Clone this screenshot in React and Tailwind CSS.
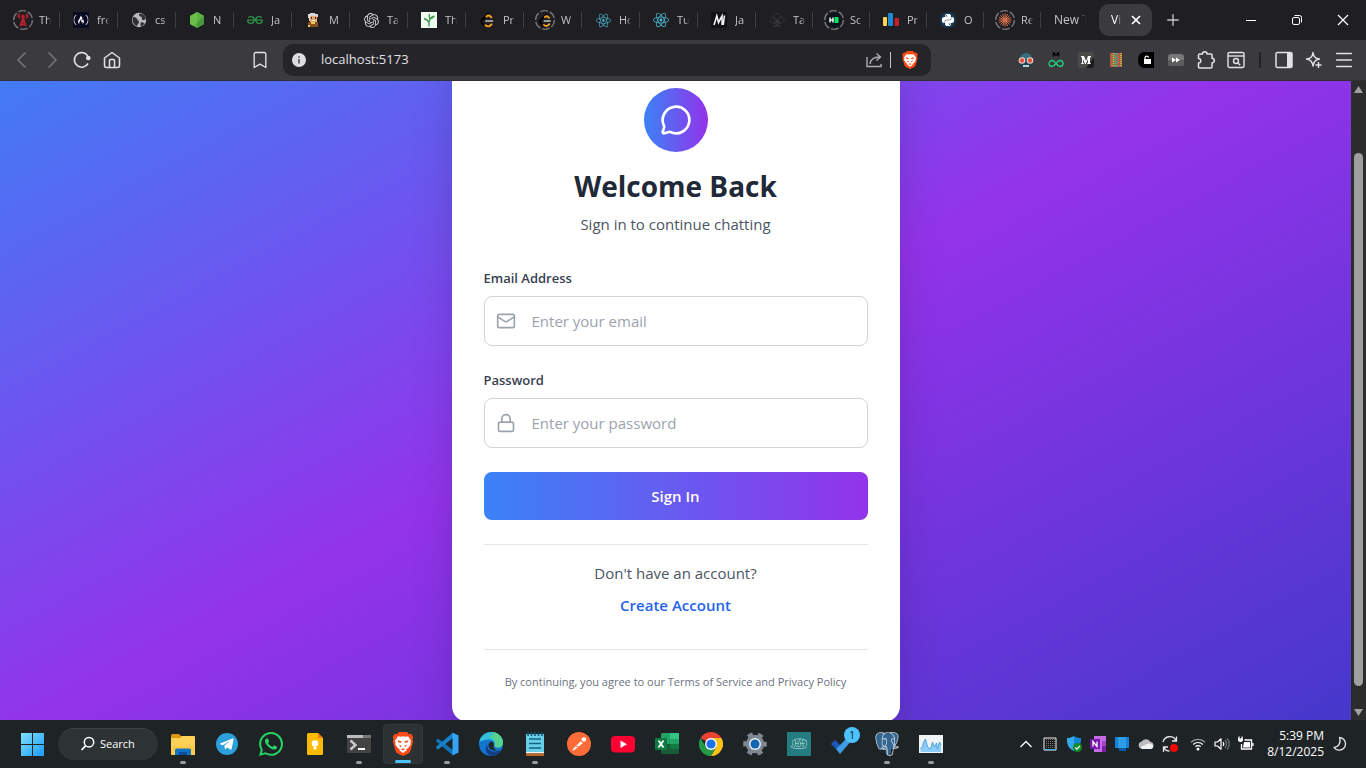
import { useLayoutEffect, useRef } from "react";
import { Bookmark, Lock, Mail, Menu, MessageCircle, Plus, X } from "lucide-react";
import {
  SiFreecodecamp,
  SiGeeksforgeeks,
  SiOpenai,
  SiPostgresql,
  SiPython,
  SiReact,
  SiWhatsapp,
} from "react-icons/si";

/* ---------- tab favicons ---------- */

function Ring({ children }) {
  return (
    <svg viewBox="0 0 24 24" className="size-6">
      {children}
      <circle cx="12" cy="12" r="9.4" fill="none" stroke="#77767b" strokeWidth="1.3" strokeDasharray="7.8 2" />
    </svg>
  );
}

function Box({ children }) {
  return (
    <svg viewBox="0 0 16 16" className="size-4">
      {children}
    </svg>
  );
}

function LeetMark() {
  return (
    <g fill="none" strokeLinecap="round" strokeWidth="2">
      <path d="M9.500 1.500 3 7.800a2.400 2.400 0 0 0 0 3.200l3 2.900" stroke="#020202" />
      <path d="M7.500 4.500c1.300-1.200 2.800-1.200 4 0l.8.8M6.500 13.200c1.500 1.400 3.800 1.400 5.200 0l.8-.8" stroke="#f5a01d" />
      <path d="M7 9h6.500" stroke="#c4c4c4" strokeWidth="1.700" />
    </g>
  );
}

const tabs = [
  {
    label: "Th",
    icon: (
      <Ring>
        <g stroke="#b3202c" fill="none" strokeWidth="1.4">
          <path d="M12 10 9.200 18M12 10l2.800 8M10.500 14h3M9.900 16.500h4.200" strokeWidth="2" />
          <path d="M9 10.500a3.500 3.500 0 0 1 0-5M15 10.500a3.500 3.500 0 0 0 0-5M7.200 9.500v-3M16.800 9.500v-3" />
          <circle cx="12" cy="8.500" r="1.200" fill="#b3202c" />
        </g>
      </Ring>
    ),
  },
  {
    label: "fre",
    icon: (
      <Box>
        <rect width="16" height="16" fill="#0a0a23" />
        <g transform="translate(.5 .5)" color="#fff"><SiFreecodecamp size={15} /></g>
      </Box>
    ),
  },
  {
    label: "cs",
    icon: (
      <Box>
        <circle cx="8" cy="8" r="7.200" fill="#b9b9bb" />
        <path d="M2 5c2 0 3.500.5 4 2s2 1.500 2 3-1.500 2-2 4c-2-.5-4.500-3-4.500-6zM8.500 1.500C7 3.500 9 4 10.500 5s-.5 2.500 1 3 2-.5 3.200-.5C14.500 4 12 1.600 8.500 1.500zM10 10.500c1.500-.5 3 .5 3.500 1A7 7 0 0 1 10 14.500c-.5-1.500-1-3 0-4z" fill="#303034" />
      </Box>
    ),
  },
  {
    label: "N",
    icon: (
      <Box>
        <path d="M8 0l7 4v8l-7 4-7-4V4z" fill="#5fb343" />
        <path d="M8 0l7 4v8l-7 4z" fill="#479a38" />
        <path d="M8 0l7 4L4 14 1 12V4z" fill="#75c750" opacity=".55" />
      </Box>
    ),
  },
  { label: "Ja", icon: <SiGeeksforgeeks className="size-4 text-[#2f8d46]" /> },
  {
    label: "M",
    icon: (
      <Box>
        <path d="M3 2h2V1h5v1h3v3h-1v4H4V6H3z" fill="#d8d8d8" />
        <path d="M5 4h7v6H5z" fill="#e9a86c" />
        <path d="M6 5h1v2H6zM10 5h1v2h-1z" fill="#3b2415" />
        <path d="M7 8h3v1H7z" fill="#fff" />
        <path d="M3 10h10v5H3z" fill="#8a4f1f" />
        <path d="M6 10h4v2H6zM3 13h2v2H3z" fill="#f0c35a" />
      </Box>
    ),
  },
  { label: "Ta", icon: <SiOpenai className="size-[15px] text-[#d0d0d2]" /> },
  {
    label: "Th",
    icon: (
      <Box>
        <rect width="16" height="16" fill="#f1faef" />
        <path d="M8 14.500c-.3-3 0-6 1.500-8.500M8.200 10.500C6.500 8 5 7 3 6.500M9 7.500c1-2 2.500-3 4.500-3.200M8.800 7C8 5 8 3.500 8.500 2" fill="none" stroke="#3f9d50" strokeWidth="1.400" />
        <path d="M3 6.500c2-.3 3.700.5 4.500 2.500C5.500 9 4 8 3 6.500zM13.500 4c-.5 2-1.800 3-4 3 .5-2 2-3 4-3z" fill="#3f9d50" />
      </Box>
    ),
  },
  { label: "Pr", icon: <Box><LeetMark /></Box> },
  { label: "W", icon: <Ring><g transform="translate(5 5) scale(.9)"><LeetMark /></g></Ring> },
  { label: "Ho", icon: <SiReact className="size-[15px] text-[#45a5bc]" /> },
  { label: "Tu", icon: <SiReact className="size-4 text-[#4cb5cf]" /> },
  {
    label: "Ja",
    icon: (
      <Box>
        <rect width="16" height="16" fill="#121216" />
        <path d="M3 13 5.800 4l1.700 6.500L11 4l.2 9M13.500 3.500 12.200 13" fill="none" stroke="#f4f4f4" strokeWidth="1.600" />
      </Box>
    ),
  },
  {
    label: "Ta",
    icon: (
      <Box>
        <g fill="none" stroke="#414145">
          <circle cx="8" cy="5" r="3.500" strokeDasharray="1.500 1" />
          <circle cx="4" cy="8" r="3" strokeDasharray="1.500 1" />
          <circle cx="12" cy="8" r="3" strokeDasharray="1.500 1" />
          <path d="M8 8v6M5 12l3-3 3 3M4 14h8" />
        </g>
      </Box>
    ),
  },
  {
    label: "Sc",
    icon: (
      <Ring>
        <rect x="5" y="5" width="14" height="14" rx="6" fill="#0c141c" />
        <path d="M8 9.500v5M11 9.500v5M8 12h3" stroke="#f4f4f4" strokeWidth="1.500" />
        <path d="M12.500 9h4v6h-4z" fill="#00ea64" />
      </Ring>
    ),
  },
  {
    label: "Pr",
    icon: (
      <Box>
        <rect x="0" y="5" width="4" height="9" rx="1" fill="#ffd54f" />
        <rect x="5" y="1" width="5" height="13" rx="1" fill="#1e88d2" />
        <rect x="11.500" y="6" width="4.500" height="8" rx="1" fill="#c4202c" />
      </Box>
    ),
  },
  {
    label: "O",
    icon: (
      <Box>
        <circle cx="8" cy="8" r="8" fill="#173853" />
        <g transform="translate(2 2)" color="#fff"><SiPython size={12} /></g>
      </Box>
    ),
  },
  {
    label: "Re",
    icon: (
      <Ring>
        <path d="M12 5.500v13M5.500 12h13M7.400 7.400l9.200 9.200M16.600 7.400l-9.200 9.200M9.500 6l5 12M14.500 6l-5 12M6 9.500l12 5M18 9.500l-12 5" stroke="#d9714c" strokeWidth="1" />
      </Ring>
    ),
  },
];

function TabStrip() {
  return (
    <div className="flex h-10 shrink-0 items-center bg-[#1f1e23] text-[12px] text-[#c4c3c8]">
      <div className="flex min-w-0 pl-[2px]">
        {tabs.map((tab, i) => (
          <button key={i} className={i < 13 ? "flex h-8 w-[58px] items-center pl-[9px]" : "flex h-8 w-[57px] items-center pl-[9px]"}>
            <span className="grid size-6 shrink-0 place-items-center">{tab.icon}</span>
            <span className="ml-1 w-3 overflow-hidden text-left text-[11px] whitespace-nowrap [mask-image:linear-gradient(to_right,#000_70%,transparent)]">
              {tab.label}
            </span>
            <span className="ml-auto h-4 w-px bg-[#3e3d42]" />
          </button>
        ))}
      </div>
      <button className="ml-[13px] w-8 overflow-hidden text-left whitespace-nowrap [mask-image:linear-gradient(to_right,#000_75%,transparent)]">
        New T
      </button>
      <div className="ml-[13px] flex h-8 w-[53px] items-center rounded-[10px] bg-[#3b3a3f] pl-3 text-white">
        <button className="w-[10px] overflow-hidden text-left whitespace-nowrap [mask-image:linear-gradient(to_right,#000_60%,transparent)]">
          Vi
        </button>
        <button aria-label="Close tab" className="ml-2">
          <X className="size-[14px]" strokeWidth={3} />
        </button>
      </div>
      <button aria-label="New tab" className="ml-3">
        <Plus className="size-[18px]" strokeWidth={1.800} />
      </button>
      <div className="ml-auto flex text-white">
        <button aria-label="Minimize" className="grid h-8 w-[46px] place-items-center">
          <svg viewBox="0 0 12 12" className="size-3"><path d="M1 6.500h10" stroke="currentColor" /></svg>
        </button>
        <button aria-label="Restore" className="grid h-8 w-[46px] place-items-center">
          <svg viewBox="0 0 12 12" className="size-3" fill="none" stroke="currentColor">
            <rect x="1.500" y="3.500" width="7" height="7" rx="1.500" />
            <path d="M3.500 1.500h5a2 2 0 0 1 2 2v5" />
          </svg>
        </button>
        <button aria-label="Close" className="grid h-8 w-[46px] place-items-center">
          <svg viewBox="0 0 12 12" className="size-3"><path d="M1 1l10 10M11 1 1 11" stroke="currentColor" strokeWidth="1.200" /></svg>
        </button>
      </div>
    </div>
  );
}

/* ---------- toolbar ---------- */

function BraveLion({ className }) {
  return (
    <svg viewBox="0 0 24 24" className={className}>
      <path d="M8 0h8l2 2.200 2.200-.4L22.300 5l-.8 2.200.7 2.300-2.700 9.300c-.5 1.500-1.300 2-2.500 2.900L12 24l-5-2.300c-1.200-.9-2-1.400-2.500-2.900L1.800 9.500l.7-2.300L1.700 5l2.100-3.200 2.200.4z" fill="#fb4a16" />
      <path d="M7 4.200l2.600.6L12 4.300l2.400.5 2.600-.6 3 4.300-.5 2.200.2 1.800-2.700 3.800-1.700.7.4 1.300L12 21l-3.700-2.700.4-1.300-1.700-.7-2.700-3.800.2-1.800L4 8.500z" fill="#fff" />
      <path d="m6.500 8.300 4 .9-.5 1.900-2.700-.9zM17.500 8.300l-4 .9.500 1.900 2.700-.9zM8 12.500l2.500 1.300-.8 1.700zM16 12.500l-2.500 1.300.8 1.700zM10 17.200l2-1 2 1-2 1.300z" fill="#fb4a16" />
    </svg>
  );
}

const navIcons = [
  ["Back", <svg viewBox="0 0 18 18" className="size-[18px] text-[#77767b]"><path d="M12.500 1.500 5 9l7.500 7.500" fill="none" stroke="currentColor" strokeWidth="1.500" /></svg>],
  ["Forward", <svg viewBox="0 0 18 18" className="size-[18px] text-[#77767b]"><path d="M5.500 1.500 13 9l-7.500 7.500" fill="none" stroke="currentColor" strokeWidth="1.500" /></svg>],
  [
    "Reload",
    <svg viewBox="0 0 18 18" className="size-[18px]">
      <path d="M13.500 3.400A7.300 7.300 0 1 0 15 12.500M13.500 3.400l1.800 3" fill="none" stroke="currentColor" strokeWidth="1.600" />
      <circle cx="15.300" cy="7" r="2.300" fill="currentColor" />
    </svg>,
  ],
  [
    "Home",
    <svg viewBox="0 0 18 18" className="size-[18px]" fill="none" stroke="currentColor" strokeWidth="1.500">
      <path d="M1.500 7 9 1.500 16.500 7v7.500a2 2 0 0 1-2 2h-11a2 2 0 0 1-2-2z" strokeLinejoin="round" />
      <path d="M6.500 16V9.500a1 1 0 0 1 1-1h3a1 1 0 0 1 1 1V16" />
    </svg>,
  ],
];

const extensions = [
  [
    "Goggles",
    <Box>
      <path d="M2 7a6 6 0 0 1 12 0z" fill="#35707f" />
      <path d="M3 7h10v8H3z" fill="#1d4654" />
      <circle cx="4" cy="8.500" r="3.300" fill="#e8d3ce" /><circle cx="12" cy="8.500" r="3.300" fill="#e8d3ce" />
      <circle cx="4" cy="8.500" r="2.200" fill="#e2503c" /><circle cx="12" cy="8.500" r="2.200" fill="#e2503c" />
      <path d="M5 13h6v2H5z" fill="#b8d5db" />
    </Box>,
  ],
  [
    "Medium reader",
    <Box>
      <path d="M5.500 4.500V.5L8 3.500l2.500-3v4" fill="none" stroke="#060606" strokeWidth="1.300" />
      <path d="M8 11.500C6.500 9.500 5.500 8.500 4 8.500a3 3 0 0 0 0 6c1.500 0 2.500-1 4-3s2.500-3 4-3a3 3 0 0 1 0 6c-1.500 0-2.500-1-4-3z" fill="none" stroke="#1fcf7a" strokeWidth="1.300" />
    </Box>,
  ],
  [
    "Medium",
    <Box>
      <rect width="16" height="16" rx="3" fill="#4b4a49" /><path d="M16 5v8a3 3 0 0 1-3 3H8z" fill="#1b1b1b" />
      <path d="M3 4h3l2 5 2-5h3v1l-1 .5V11l1 .5v.5H9v-.5l1-.5V7l-2.200 5H7L5 7v4l1 .5v.5H3v-.5l1-.5V5.500L3 5z" fill="#fff" />
    </Box>,
  ],
  [
    "Tapestry",
    <Box>
      <rect x="2" y="1" width="12" height="14" fill="#8f6d3e" />
      <path d="M3 1v14M11 1v14" stroke="#d94b48" strokeWidth="1.500" strokeDasharray="2 1" />
      <path d="M5.500 1v14M13 1v14" stroke="#e5bf48" strokeWidth="1.500" strokeDasharray="1 1" />
      <path d="M7.500 1v14" stroke="#5ca27c" strokeWidth="2" strokeDasharray="2 1" />
      <path d="M9.500 1v14" stroke="#4f92c9" strokeDasharray="2 2" />
    </Box>,
  ],
  [
    "Unlock",
    <Box>
      <path d="M6 0h10v16H6a6 8 0 0 1 0-16z" fill="#000" />
      <path d="M6 7h7v5H6z" fill="#fff" /><path d="M7 7V5.500a1.800 1.800 0 0 1 3.500 0" fill="none" stroke="#fff" strokeWidth="1.200" />
    </Box>,
  ],
  [
    "Speed",
    <Box>
      <rect y="2" width="16" height="12" rx="3" fill="#777" /><path d="M0 8h16v3a3 3 0 0 1-3 3H3a3 3 0 0 1-3-3z" fill="#5c5c5c" />
      <path d="M4 5.500 8 8l-4 2.500zM8 5.500 12 8l-4 2.500z" fill="#fff" />
    </Box>,
  ],
  [
    "Extensions",
    <svg viewBox="0 0 20 20" className="size-5" fill="none" stroke="currentColor" strokeWidth="1.500" strokeLinejoin="round">
      <path d="M6.500 4a2.300 2.300 0 0 1 4.600 0H15a1 1 0 0 1 1 1v3.300a2.300 2.300 0 0 1 0 4.600V17a1 1 0 0 1-1 1H3.500a1 1 0 0 1-1-1v-4a2.300 2.300 0 0 0 0-4.600V5a1 1 0 0 1 1-1z" />
    </svg>,
  ],
  [
    "Search page",
    <svg viewBox="0 0 18 18" className="size-[18px]" fill="none" stroke="currentColor" strokeWidth="1.400">
      <rect x="1" y="1.500" width="16" height="15" rx="1.500" /><path d="M1 5h16" /><circle cx="9" cy="10" r="2.500" /><path d="m11 12 2.200 2.200" />
    </svg>,
  ],
];

const panelIcons = [
  [
    "Side panel",
    <svg viewBox="0 0 18 18" className="size-[18px]">
      <rect x="1" y="1.500" width="16" height="15" rx="1.500" fill="none" stroke="currentColor" strokeWidth="1.500" /><path d="M12 2h5v14h-5z" fill="currentColor" />
    </svg>,
  ],
  [
    "Assistant",
    <svg viewBox="0 0 18 18" className="size-[18px]" fill="none" stroke="currentColor" strokeLinejoin="round" strokeWidth="1.400">
      <path d="M8 1.500c.8 4.500 2 5.700 6.500 6.500-2 .4-3.300.8-4.200 1.700S8.500 12.500 8 15c-.8-4.500-2-6-6.500-7C6 7.200 7.200 6 8 1.500z" /><path d="M13.500 11v6M10.500 14h6" />
    </svg>,
  ],
  ["Menu", <Menu className="size-[22px]" strokeWidth={1.700} />],
];

function ToolButton({ label, children }) {
  return (
    <button aria-label={label} className="grid size-[30px] shrink-0 place-items-center">
      {children}
    </button>
  );
}

function Toolbar() {
  return (
    <div className="flex h-[41px] shrink-0 items-center border-b border-[#302f34] bg-[#3b3a3f] px-[7px] text-[#e2e1e6]">
      {navIcons.map(([label, icon]) => <ToolButton key={label} label={label}>{icon}</ToolButton>)}
      <div className="flex-[118]" />
      <ToolButton label="Bookmark"><Bookmark className="size-5" strokeWidth={1.600} /></ToolButton>
      <div className="ml-2 min-w-0 flex-[648]">
        <div className="flex h-8 items-center rounded-[10px] bg-[#252429] pr-3 pl-[9px]">
          <svg viewBox="0 0 14 14" className="size-[14px] shrink-0">
            <circle cx="7" cy="7" r="7" fill="#dddce1" /><path d="M7 6v4.500M7 3.200v1.600" stroke="#414046" strokeWidth="1.500" />
          </svg>
          <input aria-label="Address" defaultValue="localhost:5173" className="ml-[15px] min-w-0 flex-1 bg-transparent text-[13px] outline-none" />
          <button aria-label="Share">
            <svg viewBox="0 0 18 18" className="size-[18px] text-[#aeadb3]" fill="none" stroke="currentColor" strokeWidth="1.400">
              <path d="M2 6v9.500h14V13M5 13c.5-4 3-7 9.500-7M11.500 2.500 15.500 6l-4 3.500" />
            </svg>
          </button>
          <span className="mx-[7px] h-4 w-px bg-[#c6c5ca]" />
          <button aria-label="Shields" className="ml-[3px]"><BraveLion className="size-[18px]" /></button>
        </div>
      </div>
      <div className="flex-[80]" />
      {extensions.map(([label, icon]) => <ToolButton key={label} label={label}>{icon}</ToolButton>)}
      <span className="mx-2 h-4 w-[2px] shrink-0 bg-[#232227]" />
      {panelIcons.map(([label, icon]) => <ToolButton key={label} label={label}>{icon}</ToolButton>)}
    </div>
  );
}

/* ---------- sign-in page ---------- */

function Field({ id, label, type, placeholder, Icon }) {
  return (
    <div>
      <label htmlFor={id} className="mb-2 block text-[13px] leading-5 font-semibold text-[#374151]">{label}</label>
      <div className="flex h-[50px] items-center gap-4 rounded-lg border border-[#d1d5db] px-[11px]">
        <Icon className="size-5 shrink-0 text-[#9ca3af]" />
        <input id={id} type={type} placeholder={placeholder} className="min-w-0 flex-1 text-[15px] leading-6 outline-none placeholder:text-[#9ca3af]" />
      </div>
    </div>
  );
}

function SignInCard() {
  return (
    <section className="w-full max-w-md rounded-2xl bg-white px-8 pt-[54px] pb-8 shadow-2xl">
      <header className="mb-8 text-center">
        <div className="mx-auto mb-4 grid size-16 place-items-center rounded-full bg-linear-to-r/srgb from-[#3b82f6] to-[#9333ea]">
          <MessageCircle className="size-8 text-white" />
        </div>
        <h1 className="mb-2 text-[28px] leading-9 font-bold text-[#1f2937]">Welcome Back</h1>
        <p className="text-[15px] leading-6 text-[#4b5563]">Sign in to continue chatting</p>
      </header>
      <form className="flex flex-col gap-6" onSubmit={(e) => e.preventDefault()}>
        <Field id="email" label="Email Address" type="email" placeholder="Enter your email" Icon={Mail} />
        <Field id="password" label="Password" type="password" placeholder="Enter your password" Icon={Lock} />
        <button className="h-12 rounded-lg bg-linear-to-r/srgb from-[#3b82f6] to-[#9333ea] text-[15px] leading-6 font-semibold text-white">
          Sign In
        </button>
      </form>
      <div className="mt-6 border-t border-[#e5e7eb] pt-4 text-center text-[15px] leading-6">
        <p className="mb-2 text-[#4b5563]">Don't have an account?</p>
        <button className="block w-full font-semibold text-[#2563eb]">Create Account</button>
      </div>
      <p className="mt-8 border-t border-[#e5e7eb] pt-6 text-center text-[11px] leading-4 text-[#6b7280]">
        By continuing, you agree to our Terms of Service and Privacy Policy
      </p>
    </section>
  );
}

function Page() {
  const view = useRef(null);
  useLayoutEffect(() => {
    view.current.scrollTop = 67;
  }, []);
  return (
    <div className="flex min-h-0 flex-1">
      <main ref={view} className="min-w-0 flex-1 overflow-y-auto [scrollbar-width:none]">
        <div className="flex min-h-full items-center justify-center bg-linear-to-br/srgb from-[#3b82f6] via-[#9333ea] to-[#4338ca] py-5">
          <SignInCard />
        </div>
      </main>
      <div className="flex w-[15px] shrink-0 flex-col items-center bg-[#2c2c2c] text-[#9f9f9f]">
        <svg viewBox="0 0 15 16" className="h-4 w-[15px]"><path d="M7.500 5 12 12H3z" fill="currentColor" /></svg>
        <div className="flex-[56]" />
        <div className="w-[9px] flex-[534] rounded-full bg-[#9f9f9f]" />
        <div className="flex-[18]" />
        <svg viewBox="0 0 15 16" className="h-4 w-[15px]"><path d="M7.500 12 12 5H3z" fill="currentColor" /></svg>
      </div>
    </div>
  );
}

/* ---------- taskbar ---------- */

function App24({ children }) {
  return <svg viewBox="0 0 24 24" className="size-6">{children}</svg>;
}

const apps = [
  {
    name: "Files",
    running: true,
    icon: (
      <App24>
        <path d="M0 3.500A1.500 1.500 0 0 1 1.500 2H8l3 3v4H0z" fill="#d9960f" />
        <path d="M0 6h9l1.500-2H23a1 1 0 0 1 1 1v18H0z" fill="#ffd257" />
        <path d="M0 14h24v9H0z" fill="#fbc433" opacity=".5" />
        <path d="M4 23v-5a1.500 1.500 0 0 1 1.500-1.500h13A1.500 1.500 0 0 1 20 18v5z" fill="#1272c4" /><path d="M8 20h8v3H8z" fill="#0a4e96" />
      </App24>
    ),
  },
  {
    name: "Telegram",
    icon: (
      <App24>
        <circle cx="12" cy="12" r="11" fill="#2ba0dc" />
        <path d="m4.500 11.800 13-5.300c.7-.2 1.200.2 1 1.100L16.600 17c-.2.800-.8 1-1.400.6l-3-2.200-1.600 1.500c-.3.300-.7.200-.8-.3l-.5-2.800 6-5.300-7.400 4.700-3-1z" fill="#fff" />
      </App24>
    ),
  },
  { name: "WhatsApp", icon: <SiWhatsapp className="size-6 text-[#25d366]" /> },
  {
    name: "Keep",
    icon: (
      <App24>
        <path d="M4 2.500A1.500 1.500 0 0 1 5.500 1H15l5 5v15.500a1.500 1.500 0 0 1-1.500 1.500h-13A1.500 1.500 0 0 1 4 21.500z" fill="#fcba03" />
        <path d="m15 1 5 5h-5z" fill="#f17f0b" /><circle cx="12" cy="11.500" r="3.300" fill="#fff" /><path d="M10.500 15h3v2.500h-3z" fill="#fff" />
      </App24>
    ),
  },
  {
    name: "Terminal",
    running: true,
    icon: (
      <App24>
        <rect y="3" width="24" height="18" rx="1" fill="#434343" /><path d="M0 3h24v3H0z" fill="#bcbcbc" /><path d="M16 3h8v3h-8z" fill="#777" />
        <path d="m3.500 8.500 5 4.500-5 4.500" fill="none" stroke="#c9c9c9" strokeWidth="2.500" /><path d="M11 17h7" stroke="#fff" strokeWidth="2" />
      </App24>
    ),
  },
  { name: "Brave", running: true, active: true, icon: <BraveLion className="size-6" /> },
  {
    name: "Code",
    running: true,
    icon: (
      <App24>
        <path d="M1 8.200 3 6.500 18 18v5.500L1.200 9.300z" fill="#1270b8" /><path d="M1 15.800 3 17.500 18 6V.5L1.200 14.700z" fill="#1682ce" /><path d="m17.500.5 6 3v17l-6 3z" fill="#35a4f0" />
      </App24>
    ),
  },
  {
    name: "Edge",
    icon: (
      <App24>
        <circle cx="12" cy="12" r="12" fill="#1475cf" />
        <path d="M.3 10C1.200 4.500 6 0 12 0c7 0 12 5 12 10.500 0 3-2 5-5 5-2.500 0-4-1-3.300-2.500C16.500 10 13.500 7.500 10 7.500 5.500 7.500 2 9 .3 10z" fill="#33bfd5" />
        <path d="M12 0c7 0 12 5 12 10.500 0 3-2 5-5 5-2.500 0-4-1-3.300-2.500 1-4-1.500-7-5-8.500C14 3 17 2 12 0z" fill="#55d28c" />
        <path d="M8.500 12.500c-1 5 4 8.500 10 6.500 1.500-.5 3-1 3.300-.5C20 21.500 16.500 24 12.500 24 7 23 5 16.500 8.500 12.500z" fill="#123f86" />
        <path d="M12 9.500a4 4 0 0 0-2.500 4c0 4 5 6 9.500 4.500-1.500.2-5-1-4.500-4 .8-1 .5-4-2.500-4.500z" fill="#20282b" />
      </App24>
    ),
  },
  {
    name: "Notepad",
    running: true,
    icon: (
      <App24>
        <path d="M3 2h18v19H3z" fill="#68cfe8" /><path d="M3 20h18v1.500H3z" fill="#f4f4f4" /><path d="M3 21.500h18V24H3z" fill="#b76520" />
        <path d="M6 7h12M6 11.500h12M6 16h12" stroke="#12637f" strokeWidth="1.500" /><path d="M5 0v4M8.500 0v4M12 0v4M15.500 0v4M19 0v4" stroke="#16526a" strokeWidth="1.500" />
      </App24>
    ),
  },
  {
    name: "Postman",
    icon: (
      <App24>
        <circle cx="12" cy="12" r="12" fill="#ff6c37" />
        <path d="m5 19 2-3 7-7 2 2-8 6.500z" fill="#fff" /><circle cx="16.800" cy="7.500" r="2.300" fill="#fff" /><path d="m9 14.500 4 .5M14 9l2 2" stroke="#ff6c37" strokeWidth=".8" />
      </App24>
    ),
  },
  { name: "YouTube", icon: <App24><rect y="4" width="24" height="16.500" rx="4" fill="#ff0033" /><path d="m9.500 8.500 6.500 3.700-6.500 3.700z" fill="#fff" /></App24> },
  {
    name: "Excel",
    icon: (
      <App24>
        <path d="M6 2.500A1.500 1.500 0 0 1 7.500 1H15v11H6z" fill="#21a366" /><path d="M15 1h9v6h-9z" fill="#33c481" /><path d="M15 7h9v5h-9z" fill="#21a366" />
        <path d="M6 12h9v5h9v5H6z" fill="#185c37" /><path d="M15 12h9v5h-9z" fill="#107c41" /><rect y="6" width="12" height="12" rx="1" fill="#0f7a40" />
        <path d="m3.500 8.500 5 7M8.500 8.500l-5 7" stroke="#fff" strokeWidth="1.800" />
      </App24>
    ),
  },
  {
    name: "Chrome",
    icon: (
      <App24>
        <path d="M12 12 1.600 6a12 12 0 0 1 20.800 0z" fill="#ea4335" /><path d="M12 12V6h10.400A12 12 0 0 1 12 24l5.200-9z" fill="#fbc116" />
        <path d="m12 12 5.200 3L12 24A12 12 0 0 1 1.600 6l5.200 9z" fill="#249a49" /><circle cx="12" cy="12" r="6" fill="#fff" /><circle cx="12" cy="12" r="4.600" fill="#1a73e8" />
      </App24>
    ),
  },
  {
    name: "Settings",
    icon: (
      <App24>
        <circle cx="12" cy="12" r="9.200" fill="#7e8891" /><circle cx="12" cy="12" r="9.800" fill="none" stroke="#7e8891" strokeWidth="4" strokeDasharray="5.130" strokeDashoffset="2.560" />
        <circle cx="12" cy="12" r="6" fill="#e8eef2" /><circle cx="12" cy="12" r="4.500" fill="#1166b2" />
      </App24>
    ),
  },
  {
    name: "Library",
    icon: (
      <App24>
        <path d="M0 0h24v24H0z" fill="#227c80" />
        <path d="M3.500 14c2 1.500 3-1 2-3.500M7 15c2-1 2-4 1-7M10 9c2 0 2 4 0 5s4 1.500 4-1-2-4-1-6M16 7c-1 3 1 5 0 8M18.500 8c1 2 2 5 0 6.500M5 9.500C9 6 15 6 20 9M4.500 15.500c5 1.500 10 1.500 15 0M8 11.500h3M13.500 11.500h4" fill="none" stroke="#a9d2d0" strokeWidth=".8" />
      </App24>
    ),
  },
  {
    name: "To Do",
    badge: "1",
    icon: (
      <App24>
        <path d="m0 12 4-4 6 6-4 4z" fill="#1c56b8" /><path d="m5 17 12-12 4 3L9 22z" fill="#3f9be8" />
      </App24>
    ),
  },
  {
    name: "PostgreSQL",
    running: true,
    icon: (
      <App24>
        <path d="M4 1.500c4-1.500 6 0 8 0s8-2 10.500.5c1.500 3-1 9-3 12l3 1-4 2h-2.500c0 3 0 6-2.500 6.500s-3-2-3-6l-4 .500C3 17 .5 9 1 4.500.8 3 2 2 4 1.500z" fill="#336791" />
        <g color="#d8dde2"><SiPostgresql size={24} /></g>
      </App24>
    ),
  },
  {
    name: "Monitor",
    running: true,
    icon: (
      <App24>
        <path d="M0 3h24v18H0z" fill="#f1f4f6" /><path d="M1.500 20v-4l2-1 1-5 2-3 2 8 3 2 2-7 2 5 2-4 1 6 2-7 1.500 3v7z" fill="#8cccf6" />
        <path d="m1.500 16 2-1 1-5 2-3 2 8 3 2 2-7 2 5 2-4 1 6 2-7 1.500 3" fill="none" stroke="#3695da" strokeWidth=".8" />
      </App24>
    ),
  },
];

const tray = [
  ["Show hidden icons", <svg viewBox="0 0 16 16" className="size-4"><path d="m2.500 11 5.500-5.500 5.500 5.500" fill="none" stroke="#fff" strokeWidth="1.300" /></svg>],
  [
    "Touchpad",
    <Box>
      <path d="M2 2h12v12H2z" fill="#1b1b1b" stroke="#f2f2f2" /><path d="M4.500 3v9M6.500 3v9M8.500 3v9M10.500 3v9M12.300 3v9" stroke="#777" strokeDasharray="1 1" /><path d="M2 13.500h12" stroke="#40b6f5" />
    </Box>,
  ],
  [
    "Security",
    <Box>
      <path d="M8 0c2 1.500 4 2 7 2 0 6-1 10-7 13C2 12 1 8 1 2c3 0 5-.5 7-2z" fill="#1687d3" /><path d="M8 0v15C2 12 1 8 1 2c3 0 5-.5 7-2z" fill="#35a9ea" />
      <circle cx="11.500" cy="11.500" r="4.500" fill="#118b22" /><path d="m9.200 11.500 1.700 1.700 3-3.200" fill="none" stroke="#fff" strokeWidth="1.200" />
    </Box>,
  ],
  [
    "Notebook",
    <Box>
      <path d="M4 0h12v16H4z" fill="#c869e5" /><path d="M12 5h4v5h-4z" fill="#a841ca" /><path d="M12 10h4v6h-4z" fill="#7b1fa2" />
      <path d="M0 3h10v10H0z" fill="#7719aa" /><path d="M3 10.500v-5l4 5v-5" fill="none" stroke="#fff" strokeWidth="1.300" />
    </Box>,
  ],
  ["Phone link", <Box><path d="M1 1h14v11H1z" fill="#1482d8" /><path d="M4 1h8v11H4z" fill="#2f9de8" /><path d="M5 12h7v3H5z" fill="#0a5ca5" /></Box>],
  ["Cloud", <Box><path d="M4 13a3.800 3.800 0 0 1-.2-7.500A5 5 0 0 1 12.500 6a3.600 3.600 0 0 1 .5 7z" fill="#bdbdbd" /><path d="M4 13a3.500 3.500 0 0 1-.5-3c3 .5 4-2 7-2.500 1.500-.2 4.500 1 4.500 3A2.500 2.500 0 0 1 13 13z" fill="#f3f3f3" /></Box>],
  [
    "Update",
    <svg viewBox="0 0 18 18" className="size-[18px]">
      <path d="M2 7a7 7 0 0 1 13-1.500M15.500 1.500v4.500H11M2.500 17v-5H7M3 12.500C4 15 6 16 8.500 16" fill="none" stroke="#e9e9e9" strokeWidth="1.300" /><circle cx="13" cy="13" r="4" fill="#f60606" />
    </svg>,
  ],
];

function Taskbar() {
  return (
    <footer className="flex h-12 shrink-0 items-center bg-[#1e2326] text-white">
      <button aria-label="Start" className="ml-[21px]">
        <svg viewBox="0 0 23 23" className="size-[23px]">
          <defs>
            <linearGradient id="start" x1="0" y1="0" x2="1" y2="1">
              <stop stopColor="#7fe1fc" /><stop offset="1" stopColor="#1a9bfa" />
            </linearGradient>
          </defs>
          <path d="M0 0h11v11H0zM12 0h11v11H12zM0 12h11v11H0zM12 12h11v11H12z" fill="url(#start)" />
        </svg>
      </button>
      <button className="ml-[14px] flex h-8 w-[100px] items-center gap-1 rounded-full border border-transparent border-t-[#3d4245] bg-[#2d3235] pl-[21px] text-[11px]">
        <svg viewBox="0 0 16 16" className="size-4"><circle cx="9" cy="6.200" r="4.700" fill="none" stroke="#fff" strokeWidth="1.500" /><path d="M5.500 9.800 1.500 14" stroke="#fff" strokeWidth="1.700" /></svg>
        Search
      </button>
      <div className="ml-[3px] flex">
        {apps.map((app) => (
          <button
            key={app.name}
            aria-label={app.name}
            className={
              app.active
                ? "relative mx-[2px] grid h-10 w-10 place-items-center rounded border border-[#353a3d] bg-[#2c3134]"
                : "relative mx-[2px] grid h-10 w-10 place-items-center"
            }
          >
            {app.icon}
            {app.badge && (
              <span className="absolute top-[3px] right-[3px] grid size-4 place-items-center rounded-full bg-[#4cc2ff] text-[10px] leading-none text-[#10202b]">
                {app.badge}
              </span>
            )}
            {app.running && (
              <span
                className={
                  app.active
                    ? "absolute bottom-0 left-1/2 h-[3px] w-4 -translate-x-1/2 rounded-full bg-[#4cc2ff]"
                    : "absolute bottom-0 left-1/2 h-[3px] w-[6px] -translate-x-1/2 rounded-full bg-[#9a9d9f]"
                }
              />
            )}
          </button>
        ))}
      </div>
      <div className="ml-auto flex items-center">
        {tray.map(([label, icon]) => (
          <button key={label} aria-label={label} className="grid h-8 w-6 place-items-center">{icon}</button>
        ))}
        <button aria-label="Network, volume and battery" className="ml-2 flex items-center gap-2">
          <svg viewBox="0 0 16 16" className="size-4" fill="none" stroke="#fff" strokeWidth="1.200">
            <path d="M1 6.200a10 10 0 0 1 14 0" stroke="#9b9d9f" /><path d="M3.200 8.500a6.800 6.800 0 0 1 9.600 0M5.300 10.700a3.800 3.800 0 0 1 5.400 0" /><circle cx="8" cy="13" r=".9" fill="#fff" />
          </svg>
          <svg viewBox="0 0 16 16" className="size-4" fill="none" stroke="#fff" strokeWidth="1.200">
            <path d="M1 6h2.500L7 2.800v10.400L3.500 10H1z" strokeLinejoin="round" /><path d="M9 6c.8 1 .8 3 0 4" /><path d="M11 4c2 2.200 2 5.800 0 8M13 2.500c3 3 3 8 0 11" stroke="#74787a" />
          </svg>
          <svg viewBox="0 0 16 16" className="size-4" fill="none" stroke="#fff" strokeWidth="1.300">
            <path d="M6.500 4h7v9h-10V8M15 7v3M1 .5v2.500M4 .5v2.500" /><path d="M0 2.500h5v2L3.500 6h-2L0 4.500zM6 6h6v5.500H5z" fill="#fff" stroke="none" />
          </svg>
        </button>
        <button className="ml-2 w-[62px] text-right text-[12px] leading-4 whitespace-nowrap">
          5:39 PM
          <br />
          8/12/2025
        </button>
        <button aria-label="Notifications" className="mr-[18px] ml-2">
          <svg viewBox="0 0 16 16" className="size-4"><path d="M7.500 1.500c3.500.2 6 3 6 6.300a6.300 6.300 0 0 1-11.500 3.500c4 .2 7.500-4.300 5.500-9.800z" fill="none" stroke="#e8e8e8" strokeWidth="1.300" strokeLinejoin="round" /></svg>
        </button>
      </div>
    </footer>
  );
}

export default function App() {
  return (
    <div className="flex h-screen flex-col overflow-hidden font-['Open_Sans','Noto_Sans',sans-serif]">
      <TabStrip />
      <Toolbar />
      <Page />
      <Taskbar />
    </div>
  );
}
